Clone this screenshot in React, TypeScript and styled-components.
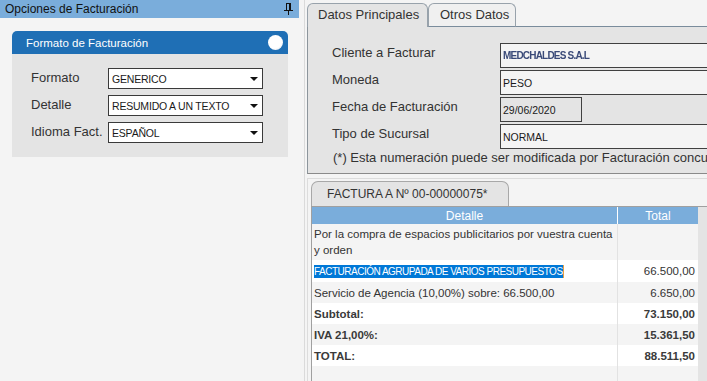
import React from 'react';
import styled, { createGlobalStyle } from 'styled-components';

const GlobalStyle = createGlobalStyle`
  html, body {
    margin: 0;
    padding: 0;
    background: #f4f4f4;
  }
  body {
    font-family: 'Liberation Sans', Arial, sans-serif;
    color: #333;
  }
`;

const Page = styled.div`
  display: flex;
  width: 707px;
  height: 381px;
  overflow: hidden;
  background: #f4f4f4;
`;

/* ---------- left dock ---------- */

const LeftPane = styled.aside`
  width: 304px;
  flex: none;
  border-right: 1px solid #dadada;
`;

const DockHeader = styled.div`
  width: 299px;
  height: 18px;
  box-sizing: border-box;
  display: flex;
  align-items: center;
  justify-content: space-between;
  padding: 0 6px 0 5px;
  background: #7aaddb;
  color: #111;
  font-size: 12px;
`;

const Panel = styled.section`
  width: 276px;
  margin: 13px 0 0 12px;
`;

const PanelHeader = styled.div`
  height: 23px;
  box-sizing: border-box;
  display: flex;
  align-items: center;
  justify-content: space-between;
  padding: 0 5px 0 14px;
  background: #1f6fb5;
  border-radius: 5px 5px 0 0;
  color: #fff;
  font-size: 11.5px;
`;

const ToggleDot = styled.span`
  width: 15px;
  height: 15px;
  border-radius: 50%;
  background: radial-gradient(circle at 40% 35%, #fff 60%, #d4dbe4 100%);
`;

const PanelBody = styled.div`
  height: 103px;
  box-sizing: border-box;
  padding: 14px 0 0 19px;
  display: flex;
  flex-direction: column;
  gap: 6px;
  background: #e4e4e4;
`;

const FieldRow = styled.div`
  display: flex;
  align-items: center;
  height: 21px;
`;

const FieldLabel = styled.span`
  width: 77px;
  padding-bottom: 3px;
  font-size: 13px;
  color: #333;
`;

const Select = styled.div`
  width: 155px;
  height: 21px;
  box-sizing: border-box;
  display: flex;
  align-items: center;
  padding: 1px 0 0 3px;
  border: 1px solid #3a3a3a;
  background: #fff;
  color: #1a1a1a;
  font-size: 10.5px;
  letter-spacing: -0.2px;
`;

const Caret = styled.span`
  margin-left: auto;
  margin-right: 4px;
  width: 0;
  height: 0;
  border-left: 4px solid transparent;
  border-right: 4px solid transparent;
  border-top: 4px solid #111;
`;

/* ---------- right side ---------- */

const RightPane = styled.main`
  flex: 1;
  min-width: 0;
  display: flex;
  flex-direction: column;
  padding-left: 2px;
`;

const TabStrip = styled.div`
  display: flex;
  align-items: flex-end;
  height: 27px;
  box-sizing: border-box;
  padding-top: 3px;
`;

const Tab = styled.div<{ $active?: boolean; $w: number }>`
  width: ${({ $w }) => $w}px;
  height: 24px;
  box-sizing: border-box;
  padding: 2px 0 0 ${({ $active }) => ($active ? 10 : 11)}px;
  border: 1px solid #98a2ab;
  border-bottom: ${({ $active }) => ($active ? 'none' : '1px solid #7a8c9c')};
  border-radius: 6px 6px 0 0;
  background: ${({ $active }) => ($active ? '#e4e4e4' : '#f0f0f0')};
  color: #333;
  font-size: 13px;
  line-height: 18px;
`;

const TabFiller = styled.div`
  flex: 1;
  border-bottom: 1px solid #7a8c9c;
`;

const TabPanel = styled.div`
  height: 147px;
  box-sizing: border-box;
  padding: 16px 0 0 24px;
  border-left: 1px solid #8c959c;
  border-bottom: 1px solid #8a8a8a;
  background: #e4e4e4;
  overflow: hidden;
`;

const FormGrid = styled.div`
  display: grid;
  grid-template-columns: 168px 1fr;
  row-gap: 2px;
`;

const FormLabel = styled.span`
  align-self: start;
  font-size: 13px;
  line-height: 19px;
  color: #333;
  white-space: nowrap;
`;

const Input = styled.div<{ $w?: number; $bg?: string }>`
  width: ${({ $w }) => $w ?? 240}px;
  height: 25px;
  box-sizing: border-box;
  display: flex;
  align-items: center;
  padding-left: 2px;
  border: 1px solid #404040;
  background: ${({ $bg }) => $bg ?? '#f4f4f4'};
  color: #1a1a1a;
  font-size: 10.5px;
  white-space: nowrap;
`;

const Blurred = styled.span`
  font-size: 10px;
  font-weight: bold;
  letter-spacing: -0.8px;
  color: #3a4a78;
  filter: blur(0.7px);
`;

const Note = styled.p`
  width: 374px;
  margin: 1px 0 0 1px;
  overflow: hidden;
  font-size: 13px;
  line-height: 16px;
  color: #333;
  white-space: nowrap;
`;

/* ---------- invoice ---------- */

const InvoiceSection = styled.section`
  flex: 1;
  min-height: 0;
  margin-top: 4px;
  padding: 2px 0 0 3px;
  display: flex;
  flex-direction: column;
  border-top: 1px solid #dcdcdc;
  border-left: 1px solid #dcdcdc;
`;

const InvoiceTabs = styled.div`
  display: flex;
  border-bottom: 1px solid #a0a0a0;
`;

const InvoiceTab = styled.div`
  width: 198px;
  height: 25px;
  box-sizing: border-box;
  padding: 4px 0 0 15px;
  border: 1px solid #a8a8a8;
  border-bottom: none;
  border-radius: 7px 7px 0 0;
  background: #e4e4e4;
  color: #333;
  font-size: 12px;
  line-height: 16px;
`;

const GridArea = styled.div`
  flex: 1;
  min-height: 0;
  display: flex;
  overflow: hidden;
`;

const TableWrap = styled.div`
  width: 387px;
  flex: none;
  box-sizing: border-box;
  border-left: 1px solid #a0a0a0;
`;

const ScrollTrack = styled.div`
  flex: 1;
  background: #e4e4e4;
`;

const Table = styled.table`
  width: 100%;
  border-collapse: collapse;
  table-layout: fixed;
`;

const Th = styled.th<{ $w?: number }>`
  width: ${({ $w }) => ($w ? `${$w}px` : 'auto')};
  height: 17px;
  padding: 0;
  background: #7aaddb;
  color: #fff;
  font-size: 12px;
  font-weight: normal;
  text-align: center;
  border-right: 1px solid #fff;
  &:last-child {
    border-right: none;
  }
`;

const Tr = styled.tr<{ $h?: number }>`
  height: ${({ $h }) => $h ?? 21}px;
  background: #f4f4f4;
  &:nth-child(even) {
    background: #fff;
  }
`;

const Td = styled.td<{ $num?: boolean; $bold?: boolean; $top?: boolean }>`
  padding: ${({ $num, $top }) => ($num ? '0 3px 0 0' : `${$top ? 2 : 0}px 0 0 2px`)};
  font-size: 11.5px;
  line-height: 16px;
  font-weight: ${({ $bold }) => ($bold ? 'bold' : 'normal')};
  text-align: ${({ $num }) => ($num ? 'right' : 'left')};
  vertical-align: ${({ $top }) => ($top ? 'top' : 'middle')};
  color: ${({ $bold }) => ($bold ? '#3a3a3a' : '#333')};
  border-right: 1px solid #e2e2e2;
  &:last-child {
    border-right: none;
  }
`;

const Selection = styled.span`
  display: inline-block;
  height: 13px;
  line-height: 13px;
  background: #0078d7;
  color: #fff;
  font-size: 10px;
  letter-spacing: -0.5px;
  border-right: 1px solid #e8a040;
`;

const PinIcon = () => (
  <svg width="9" height="12" viewBox="0 0 9 12" shapeRendering="crispEdges">
    <rect x="2" y="0" width="5" height="1" fill="#111" />
    <rect x="2" y="0" width="1" height="7" fill="#111" />
    <rect x="5" y="0" width="2" height="7" fill="#111" />
    <rect x="0" y="7" width="9" height="1" fill="#111" />
    <rect x="4" y="8" width="1" height="4" fill="#111" />
  </svg>
);

const selects = [
  { label: 'Formato', value: 'GENERICO' },
  { label: 'Detalle', value: 'RESUMIDO A UN TEXTO' },
  { label: 'Idioma Fact.', value: 'ESPAÑOL' },
];

type Line = { text: string; total: string; bold?: boolean };

const lines: Line[] = [
  { text: 'Servicio de Agencia (10,00%) sobre: 66.500,00', total: '6.650,00' },
  { text: 'Subtotal:', total: '73.150,00', bold: true },
  { text: 'IVA 21,00%:', total: '15.361,50', bold: true },
  { text: 'TOTAL:', total: '88.511,50', bold: true },
];

const App: React.FC = () => (
  <>
    <GlobalStyle />
    <Page>
      <LeftPane>
        <DockHeader>
          <span>Opciones de Facturación</span>
          <PinIcon />
        </DockHeader>
        <Panel>
          <PanelHeader>
            <span>Formato de Facturación</span>
            <ToggleDot />
          </PanelHeader>
          <PanelBody>
            {selects.map((s) => (
              <FieldRow key={s.label}>
                <FieldLabel>{s.label}</FieldLabel>
                <Select>
                  {s.value}
                  <Caret />
                </Select>
              </FieldRow>
            ))}
          </PanelBody>
        </Panel>
      </LeftPane>

      <RightPane>
        <TabStrip>
          <Tab $active $w={121}>Datos Principales</Tab>
          <Tab $w={88}>Otros Datos</Tab>
          <TabFiller />
        </TabStrip>
        <TabPanel>
          <FormGrid>
            <FormLabel>Cliente a Facturar</FormLabel>
            <Input>
              <Blurred>MEDCHALDES S.A.L</Blurred>
            </Input>
            <FormLabel>Moneda</FormLabel>
            <Input>PESO</Input>
            <FormLabel>Fecha de Facturación</FormLabel>
            <Input $w={82} $bg="#e4e4e4">29/06/2020</Input>
            <FormLabel>Tipo de Sucursal</FormLabel>
            <Input>NORMAL</Input>
          </FormGrid>
          <Note>(*) Esta numeración puede ser modificada por Facturación concu</Note>
        </TabPanel>

        <InvoiceSection>
          <InvoiceTabs>
            <InvoiceTab>FACTURA A Nº 00-00000075*</InvoiceTab>
          </InvoiceTabs>
          <GridArea>
            <TableWrap>
              <Table>
                <thead>
                  <tr>
                    <Th $w={305}>Detalle</Th>
                    <Th>Total</Th>
                  </tr>
                </thead>
                <tbody>
                  <Tr $h={36}>
                    <Td $top>Por la compra de espacios publicitarios por vuestra cuenta y orden</Td>
                    <Td $num />
                  </Tr>
                  <Tr $h={22}>
                    <Td>
                      <Selection>FACTURACIÓN AGRUPADA DE VARIOS PRESUPUESTOS</Selection>
                    </Td>
                    <Td $num>66.500,00</Td>
                  </Tr>
                  {lines.map((l) => (
                    <Tr key={l.text}>
                      <Td $bold={l.bold}>{l.text}</Td>
                      <Td $num $bold={l.bold}>
                        {l.total}
                      </Td>
                    </Tr>
                  ))}
                  <Tr $h={40}>
                    <Td />
                    <Td $num />
                  </Tr>
                </tbody>
              </Table>
            </TableWrap>
            <ScrollTrack />
          </GridArea>
        </InvoiceSection>
      </RightPane>
    </Page>
  </>
);

export default App;
